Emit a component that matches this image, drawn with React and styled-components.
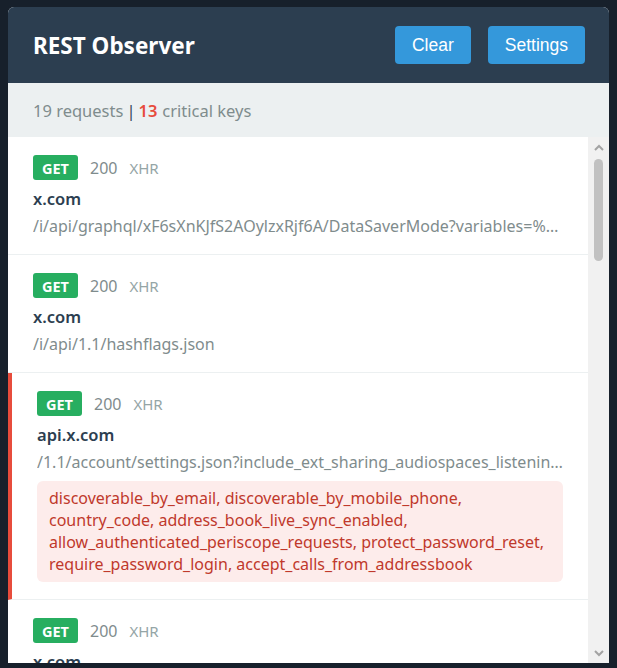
import React from "react";
import styled, { createGlobalStyle } from "styled-components";

const requests = [
  { domain: "x.com", path: "/i/api/graphql/xF6sXnKJfS2AOylzxRjf6A/DataSaverMode?variables=%7B%22device_id%22%3A%22Web-12%22%7D" },
  { domain: "x.com", path: "/i/api/1.1/hashflags.json" },
  {
    domain: "api.x.com",
    path: "/1.1/account/settings.json?include_ext_sharing_audiospaces_listening_data_with_followers=true&include_mention_filter=true",
    keys: [
      "discoverable_by_email",
      "discoverable_by_mobile_phone",
      "country_code",
      "address_book_live_sync_enabled",
      "allow_authenticated_periscope_requests",
      "protect_password_reset",
      "require_password_login",
      "accept_calls_from_addressbook",
    ],
  },
  { domain: "x.com", path: "/i/api/graphql/HPEisOmj1epUNLCWTYhUWw/UserByScreenName?variables=%7B%22screen_name%22" },
  { domain: "x.com", path: "/i/api/1.1/jot/client_event.json" },
  { domain: "api.x.com", path: "/1.1/help/settings.json?include_zero_rate=true&feature_set_token=" },
  { domain: "x.com", path: "/i/api/graphql/7r8ibjHuK3MWUyzkzHNMYQ/HomeTimeline?variables=%7B%22count%22%3A20" },
  { domain: "x.com", path: "/i/api/2/badge_count/badge_count.json?supports_ntab_urt=1" },
  { domain: "api.x.com", path: "/1.1/account/verify_credentials.json", keys: ["email", "phone_number"] },
  { domain: "x.com", path: "/i/api/graphql/lJa0k5LLU3rmLlSMA4dhcg/ExploreSidebar" },
  { domain: "x.com", path: "/i/api/fleets/v1/fleetline?only_spaces=true" },
  { domain: "x.com", path: "/i/api/1.1/dm/inbox_initial_state.json?nsfw_filtering_enabled=false" },
  { domain: "api.x.com", path: "/graphql/Bj2VP2sNrsOxiSAyD7cT_w/Viewer?variables=%7B%22withCommunities%22" },
  { domain: "x.com", path: "/i/api/1.1/keyregistry/extract_public_keys/1754110932", keys: ["public_key"] },
  { domain: "x.com", path: "/i/api/graphql/Xxdt_TSMzIlhqVtUhcwt1g/useFetchProfileSections" },
  { domain: "x.com", path: "/i/api/1.1/account/multi/list.json" },
  { domain: "api.x.com", path: "/1.1/live_pipeline/update_subscriptions" },
  { domain: "x.com", path: "/i/api/2/notifications/all.json?include_profile_interstitial_type=1" },
  { domain: "x.com", path: "/i/api/graphql/mN7pfJXXu2i8Tu0Q4yZ_pA/TweetDetail?variables=%7B%22focalTweetId%22" },
];

const GlobalStyle = createGlobalStyle`
  html, body {
    margin: 0;
    height: 100%;
    background: #17202b;
    font-family: "Noto Sans", "Open Sans", sans-serif;
    overflow: hidden;
  }
`;

const Popup = styled.div`
  margin: 7px 8px 0 8px;
  height: 656px;
  display: flex;
  flex-direction: column;
  background: #ffffff;
  border-radius: 6px 6px 0 0;
  overflow: hidden;
`;

const Header = styled.header`
  flex: none;
  height: 76px;
  padding: 0 24px 0 25px;
  display: flex;
  align-items: center;
  justify-content: space-between;
  background: #2c3e50;
`;

const Title = styled.h1`
  margin: 0;
  color: #ffffff;
  font-size: 22.5px;
  font-weight: 700;
`;

const Actions = styled.div`
  display: flex;
  gap: 17px;
`;

const Button = styled.button`
  height: 38px;
  padding: 0 17px;
  border: none;
  border-radius: 4px;
  background: #3498db;
  color: #ffffff;
  font-family: "Liberation Sans", Arial, sans-serif;
  font-size: 17.5px;
  cursor: pointer;
`;

const Stats = styled.div`
  flex: none;
  height: 54px;
  padding: 0 25px;
  display: flex;
  align-items: center;
  background: #ecf0f1;
  color: #7f8c8d;
  font-size: 16.5px;
`;

const Sep = styled.span`
  color: #34495e;
  margin: 0 3px;
`;

const Critical = styled.span`
  color: #e74c3c;
  font-weight: 600;
  margin-right: 5px;
`;

const Body = styled.div`
  flex: 1;
  min-height: 0;
  display: flex;
`;

const List = styled.div`
  flex: 1;
  min-width: 0;
  overflow-y: auto;
  scrollbar-width: none;
  &::-webkit-scrollbar {
    display: none;
  }
`;

const Track = styled.div`
  flex: none;
  width: 21px;
  display: flex;
  flex-direction: column;
  align-items: center;
  background: #f1f1f1;
`;

const Arrow = styled.div`
  flex: none;
  height: 20px;
  display: flex;
  align-items: center;
  justify-content: center;
  color: #a3a3a3;
`;

const Rail = styled.div`
  flex: 1;
  width: 100%;
  display: flex;
  justify-content: center;
  padding-top: 2px;
`;

const Thumb = styled.div`
  width: 9px;
  height: 102px;
  border-radius: 5px;
  background: #c1c1c1;
`;

const Item = styled.div`
  padding: 18px 25px 17px;
  border-bottom: 1px solid #ecf0f1;
  border-left: ${(p) => (p.$critical ? "4px solid #e74c3c" : "none")};
`;

const Meta = styled.div`
  display: flex;
  align-items: center;
  gap: 12px;
  height: 25px;
`;

const Method = styled.span`
  display: inline-flex;
  align-items: center;
  justify-content: center;
  width: 45px;
  height: 25px;
  border-radius: 3px;
  background: #27ae60;
  color: #ffffff;
  font-size: 14.5px;
  font-weight: 700;
`;

const Status = styled.span`
  color: #7f8c8d;
  font-size: 16px;
`;

const Type = styled.span`
  color: #95a5a6;
  font-size: 15px;
`;

const Domain = styled.div`
  margin-top: 8px;
  color: #2c3e50;
  font-size: 16.5px;
  font-weight: 600;
  line-height: 22px;
`;

const Path = styled.div`
  margin-top: 5px;
  color: #7f8c8d;
  font-size: 16px;
  line-height: 22px;
  white-space: nowrap;
  overflow: hidden;
  text-overflow: ellipsis;
`;

const Keys = styled.div`
  margin-top: 8px;
  padding: 6px 12px 7px;
  border-radius: 6px;
  background: #fdeceb;
  color: #c0392b;
  font-size: 16px;
  line-height: 22px;
`;

const Chevron = ({ up }) => (
  <svg width="10" height="7" viewBox="0 0 10 7">
    <path
      d={up ? "M1 6 L5 2 L9 6" : "M1 1 L5 5 L9 1"}
      fill="none"
      stroke="currentColor"
      strokeWidth="2"
    />
  </svg>
);

export default function App() {
  return (
    <>
      <GlobalStyle />
      <Popup>
        <Header>
          <Title>REST Observer</Title>
          <Actions>
            <Button>Clear</Button>
            <Button>Settings</Button>
          </Actions>
        </Header>
        <Stats>
          19 requests<Sep>|</Sep>
          <Critical>13</Critical>critical keys
        </Stats>
        <Body>
          <List>
            {requests.slice(0, 19).map((r, i) => (
              <Item key={i} $critical={!!r.keys}>
                <Meta>
                  <Method>GET</Method>
                  <Status>200</Status>
                  <Type>XHR</Type>
                </Meta>
                <Domain>{r.domain}</Domain>
                <Path>{r.path}</Path>
                {r.keys ? <Keys>{r.keys.join(", ")}</Keys> : null}
              </Item>
            ))}
          </List>
          <Track>
            <Arrow>
              <Chevron up />
            </Arrow>
            <Rail>
              <Thumb />
            </Rail>
            <Arrow>
              <Chevron />
            </Arrow>
          </Track>
        </Body>
      </Popup>
    </>
  );
}
